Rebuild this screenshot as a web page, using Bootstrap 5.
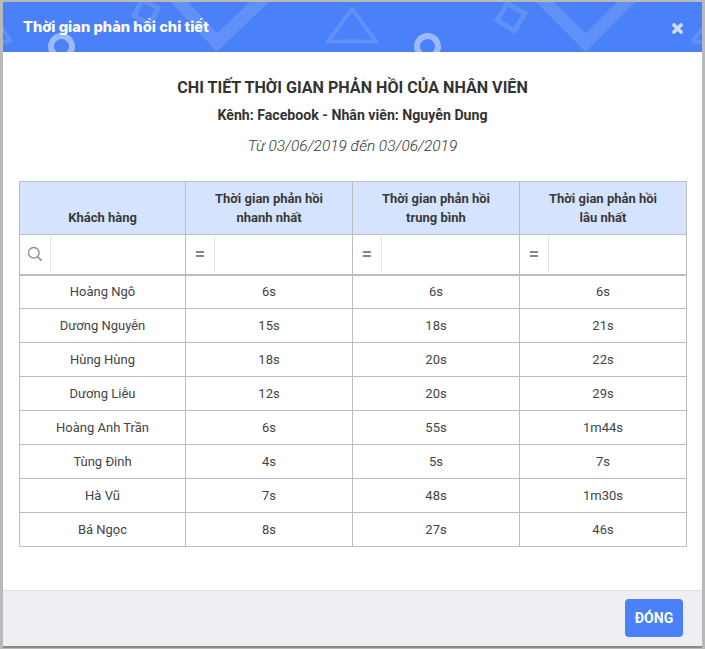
<!DOCTYPE html>
<html lang="vi"><head><meta charset="utf-8"><title>Thời gian phản hồi chi tiết</title>
<link href="https://cdn.jsdelivr.net/npm/bootstrap@5.3.0/dist/css/bootstrap.min.css" rel="stylesheet">
<style>
html,body{height:100%;margin:0;overflow:hidden}
body{background:#b9b9b9;font-family:Roboto,"Liberation Sans",sans-serif;color:#333;padding:2px 3px 3px 3px}
.dlg{height:644px;background:#fff;box-shadow:0 2px 0 #8a8a8a}
.dlg-head{height:50px;background:#4a80f8;position:relative;overflow:hidden;flex:none}
.dlg-head svg{position:absolute;left:0;top:0}
.dlg-title{position:relative;font-family:Inter,"Open Sans",sans-serif;font-weight:800;font-size:14.7px;color:#fff;padding:16px 0 0 20px;line-height:18px}
.dlg-x{position:absolute;right:19px;top:21px;line-height:0;width:11px;height:11px}
.dlg-body{padding:26px 16px 0;flex:1}
.t1{font-size:16.13px;font-weight:700;line-height:20px;color:#333}
.t2{font-size:14.15px;font-weight:700;line-height:18px;margin-top:8px;color:#333}
.t3{font-size:15.45px;font-style:italic;line-height:20px;margin-top:12px;color:#333;font-weight:300}
.tbl{width:667px;margin:25px 0 0;table-layout:fixed;border-collapse:collapse;font-size:13px}
.tbl th,.tbl td{border:1px solid #bdbdbd;text-align:center;padding:0;vertical-align:middle;color:#444}
.tbl thead tr.hrow th{background:#d6e3fd;height:53px;font-size:13px;font-weight:700;line-height:19px;vertical-align:bottom;padding-bottom:7px;color:#3a3a3a}
.tbl td.fcell{height:40px;border-bottom:2px solid #bdbdbd}
.fop{width:29px;flex:none;border-right:1px solid #e2e2e2;color:#858585;font-size:18px;font-weight:700;height:37px;line-height:1}
.fop-s{width:31px}
.tbl tbody td{height:34px}
.dlg-foot{height:56px;background:#eeeef3;border-top:1px solid #e0e0e0;padding:8px 19px 0 0;flex:none}
.btn-close-dlg{width:58px;height:38px;background:#4a80f8;color:#fff;font-size:14px;font-weight:700;border:0;border-radius:4px;padding:0}
</style></head>
<body>
<div class="dlg d-flex flex-column">
  <div class="dlg-head">
    <svg width="699" height="50" viewBox="0 0 699 50" fill="none" aria-hidden="true">
      <g stroke="#fff" stroke-opacity=".13">
        <path d="M-14 39.5 L6 39.5 M-6 18 L8 40" stroke-width="4"/>
        <path d="M168 -9 L214 40.5 L266 -9" stroke-width="13"/>
        <rect x="134" y="1" width="18" height="18" transform="rotate(27 143 10)" stroke-width="5"/>
        <path d="M325 39.5 L373 39.5 L349 7 Z" stroke-width="4"/>
        <rect x="498" y="5" width="20" height="20" transform="rotate(31 508 15)" stroke-width="5"/>
        <path d="M534 -8 L582.5 40.5 L631 -8" stroke-width="13"/>
        <path d="M689 39.5 L720 39.5 M689 39.5 L712 12" stroke-width="4"/>
      </g>
      <circle cx="58.5" cy="44.5" r="10.5" stroke="#fff" stroke-opacity=".45" stroke-width="6"/>
      <circle cx="424.5" cy="44.5" r="10.5" stroke="#fff" stroke-opacity=".45" stroke-width="6"/>
    </svg>
    <div class="dlg-title">Thời gian phản hồi chi tiết</div>
    <div class="dlg-x"><svg width="11" height="11" viewBox="0 0 11 11"><path d="M2 2 L9 9 M9 2 L2 9" stroke="#d2def9" stroke-width="3.6" stroke-linecap="round"/></svg></div>
  </div>
  <div class="dlg-body">
    <div class="text-center">
      <div class="t1">CHI TIẾT THỜI GIAN PHẢN HỒI CỦA NHÂN VIÊN</div>
      <div class="t2">Kênh: Facebook - Nhân viên: Nguyễn Dung</div>
      <div class="t3">Từ 03/06/2019 đến 03/06/2019</div>
    </div>
    <table class="tbl">
      <colgroup><col style="width:166px"><col style="width:167px"><col style="width:167px"><col style="width:167px"></colgroup>
      <thead>
        <tr class="hrow"><th>Khách hàng</th><th>Thời gian phản hồi<br>nhanh nhất</th><th>Thời gian phản hồi<br>trung bình</th><th>Thời gian phản hồi<br>lâu nhất</th></tr>
        <tr>
          <td class="fcell"><div class="d-flex align-items-center"><div class="fop fop-s d-flex align-items-center justify-content-center"><svg width="16" height="16" viewBox="0 0 16 16" fill="none" stroke="#8c8c8c" stroke-width="1.3"><circle cx="6.8" cy="6.8" r="5.3"/><path d="M10.7 10.7 L14.6 14.6" stroke-width="1.6"/></svg></div></div></td>
          <td class="fcell"><div class="d-flex align-items-center"><div class="fop d-flex align-items-center justify-content-center">=</div></div></td>
          <td class="fcell"><div class="d-flex align-items-center"><div class="fop d-flex align-items-center justify-content-center">=</div></div></td>
          <td class="fcell"><div class="d-flex align-items-center"><div class="fop d-flex align-items-center justify-content-center">=</div></div></td>
        </tr>
      </thead>
      <tbody>
        <tr><td>Hoàng Ngô</td><td>6s</td><td>6s</td><td>6s</td></tr>
        <tr><td>Dương Nguyễn</td><td>15s</td><td>18s</td><td>21s</td></tr>
        <tr><td>Hùng Hùng</td><td>18s</td><td>20s</td><td>22s</td></tr>
        <tr><td>Dương Liễu</td><td>12s</td><td>20s</td><td>29s</td></tr>
        <tr><td>Hoàng Anh Trần</td><td>6s</td><td>55s</td><td>1m44s</td></tr>
        <tr><td>Tùng Đinh</td><td>4s</td><td>5s</td><td>7s</td></tr>
        <tr><td>Hà Vũ</td><td>7s</td><td>48s</td><td>1m30s</td></tr>
        <tr><td>Bá Ngọc</td><td>8s</td><td>27s</td><td>46s</td></tr>
      </tbody>
    </table>
  </div>
  <div class="dlg-foot d-flex justify-content-end align-items-start">
    <button type="button" class="btn btn-close-dlg">ĐÓNG</button>
  </div>
</div>
<script src="https://cdn.jsdelivr.net/npm/bootstrap@5.3.0/dist/js/bootstrap.bundle.min.js"></script>
</body></html>
